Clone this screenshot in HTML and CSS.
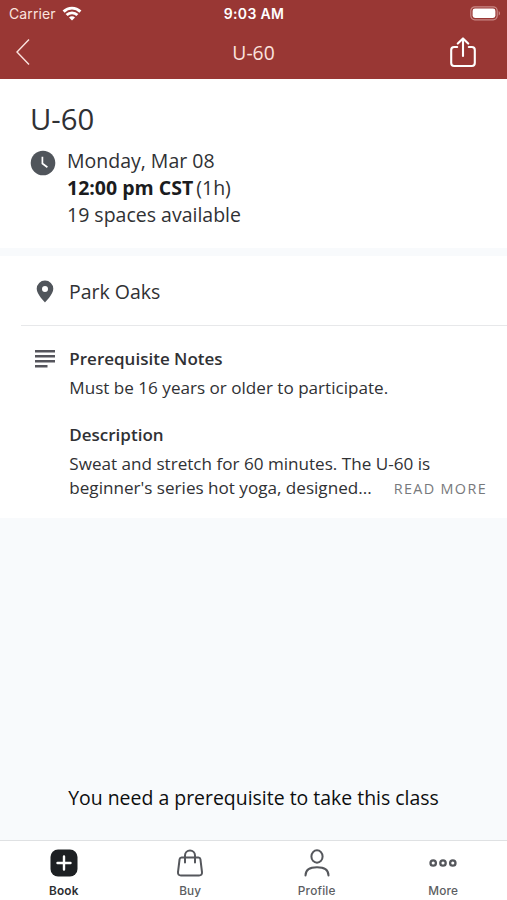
FILE: index.html
```html
<!DOCTYPE html>
<html lang="en">
<head>
<meta charset="utf-8">
<title>U-60</title>
<link rel="stylesheet" href="styles.css">
</head>
<body>
<div class="app">
  <header class="header">
    <div class="status">
      <div class="carrier"><span>Carrier</span>
        <svg width="20" height="15" viewBox="0 0 20 15" fill="none" stroke="#fff" stroke-width="2.9"><path d="M1.600 5.600a12 12 0 0 1 16.800 0M4.600 9.100a7.600 7.600 0 0 1 10.800 0"/><path d="M10 14.500 7 11.500a4.200 4.200 0 0 1 6 0z" fill="#fff" stroke="none"/></svg>
      </div>
      <div class="time">9:03 AM</div>
      <svg class="battery" width="31" height="15" viewBox="0 0 31 15"><rect x=".8" y=".8" width="26.4" height="13" rx="4" fill="none" stroke="#c98885" stroke-width="1.2"/><rect x="2.6" y="2.6" width="22.8" height="9.4" rx="2.4" fill="#fff"/><path d="M28.7 5v4.6c1.8-.8 1.8-3.8 0-4.6z" fill="#c98885"/></svg>
    </div>
    <nav class="nav">
      <svg width="14" height="28" viewBox="0 0 14 28" fill="none" stroke="#fbe3df" stroke-width="1.4"><path d="M13 1.500 1 14l12 12.500"/></svg>
      <h1 class="nav-title">U-60</h1>
      <svg class="share" width="26" height="31" viewBox="0 0 26 31" fill="none" stroke="#fff" stroke-width="2.100" stroke-linecap="round" stroke-linejoin="round"><path d="M7.200 10H4.200Q1.200 10 1.200 13V26Q1.200 29 4.200 29H21.800Q24.800 29 24.800 26V13Q24.800 10 21.800 10H18.800M13 19V2M7.800 6.600 13 1.400l5.200 5.200"/></svg>
    </nav>
  </header>
  <main class="main">
    <section class="summary">
      <h2 class="class-name">U-60</h2>
      <div class="when">
        <svg width="26" height="26" viewBox="0 0 26 26"><circle cx="13" cy="13" r="12.300" fill="#50555b"/><path d="M12.400 6.800v6.700l5 3.700" fill="none" stroke="#fff" stroke-width="1.700"/></svg>
        <div class="when-text">
          <div class="date">Monday, Mar 08</div>
          <div class="hours"><b>12:00 pm CST</b><span>(1h)</span></div>
          <div class="spaces">19 spaces available</div>
        </div>
      </div>
    </section>
    <section class="location">
      <svg width="18" height="23" viewBox="0 0 18 23"><path fill="#50555b" fill-rule="evenodd" d="M9 .5A8.300 8.300 0 0 0 .7 8.800C.7 14.500 9 22.500 9 22.500s8.300-8 8.300-13.700A8.300 8.300 0 0 0 9 .5zm0 5.400a3 3 0 1 1 0 6 3 3 0 0 1 0-6z"/></svg>
      <span class="place">Park Oaks</span>
    </section>
    <section class="details">
      <svg width="20" height="18" viewBox="0 0 20 18" fill="#55555c"><path d="M0 0h20v2.500H0zM0 5h20v2.500H0zM0 10h20v2.500H0zM0 15h12.500v2.500H0z"/></svg>
      <div class="notes">
        <h3 class="label prereq">Prerequisite Notes</h3>
        <p class="line must">Must be 16 years or older to participate.</p>
        <h3 class="label desc">Description</h3>
        <p class="line sweat">Sweat and stretch for 60 minutes. The U-60 is</p>
        <div class="last"><p class="line">beginner's series hot yoga, designed...</p><a class="more">READ MORE</a></div>
      </div>
    </section>
    <p class="warning">You need a prerequisite to take this class</p>
  </main>
  <footer class="tabs">
    <div class="tab active"><svg width="28" height="28" viewBox="0 0 28 28"><rect x=".5" y=".5" width="27" height="27" rx="7.500" fill="#1d2023"/><path d="M14 7.500v13M7.500 14h13" stroke="#fff" stroke-width="2.400" stroke-linecap="round"/></svg><span>Book</span></div>
    <div class="tab"><svg width="28" height="28" viewBox="0 0 28 28" fill="none" stroke="#55575c" stroke-width="2" stroke-linecap="round" stroke-linejoin="round"><path d="M5.500 8.500h17q1.600 0 1.900 1.700l1.600 13q.3 3.300-3 3.300H5q-3.300 0-3-3.300l1.600-13Q3.900 8.500 5.500 8.500zM9 13.500V6.500a5 5 0 0 1 10 0v7"/></svg><span>Buy</span></div>
    <div class="tab"><svg width="28" height="28" viewBox="0 0 28 28" fill="none" stroke="#55575c" stroke-width="2" stroke-linecap="round"><ellipse cx="14" cy="7.500" rx="5.600" ry="6.200"/><path d="M2.500 26.500c0-5.500 4.500-8.200 11.500-8.200s11.500 2.700 11.500 8.200"/></svg><span>Profile</span></div>
    <div class="tab"><svg width="28" height="28" viewBox="0 0 28 28" fill="none" stroke="#55575c" stroke-width="2.300"><circle cx="4.200" cy="14" r="2.700"/><circle cx="14" cy="14" r="2.700"/><circle cx="23.800" cy="14" r="2.700"/></svg><span>More</span></div>
  </footer>
</div>
</body>
</html>
```
FILE: styles.css
```css
* { box-sizing: border-box; margin: 0; padding: 0; }
body { font-family: "Open Sans", "Noto Sans", sans-serif; color: #303134; background: #f8fafc; }
svg { display: block; flex: none; }
.app { width: 507px; height: 900px; display: flex; flex-direction: column; white-space: nowrap; overflow: hidden; }
.header { height: 79px; background: #993734; color: #fff; flex: none; }
.status { height: 27px; display: grid; grid-template-columns: 1fr auto 1fr; align-items: center; padding: 0 6px 0 9px; font-family: Inter, sans-serif; }
.carrier { display: flex; align-items: center; gap: 6px; font-size: 14px; letter-spacing: .1px; color: #fbe3df; }
.time { font-size: 14px; font-weight: 600; letter-spacing: .35px; margin-left: -2px; }
.battery { justify-self: end; }
.nav { height: 52px; display: grid; grid-template-columns: 1fr auto 1fr; align-items: center; padding: 0 31px 0 16px; }
.nav > svg { margin-bottom: 2px; }
.nav-title { font-size: 19.3px; line-height: 26px; font-weight: 400; color: #fbe3df; margin: 0 0 1px 15px; }
.share { justify-self: end; }
.main { flex: 1; display: flex; flex-direction: column; }
.summary { height: 169px; background: #fff; padding: 20px 30px 0; margin-bottom: 8px; }
.class-name { font-size: 29.3px; line-height: 40px; font-weight: 400; }
.when { display: flex; gap: 11px; margin-top: 8px; }
.when svg { margin-top: 3px; }
.when-text { font-size: 19.5px; line-height: 27px; margin-top: -.5px; }
.hours b { color: #1b1c1e; margin-right: 3px; }
.location { height: 69px; background: #fff; display: flex; align-items: center; gap: 15px; padding: 2px 0 0 36px; font-size: 19.5px; }
.details { height: 193px; background: #fff linear-gradient(#e7e8ea, #e7e8ea) 21px 0 / 486px 1px no-repeat; display: flex; gap: 14.300px; padding: 22px 20px 0 35px; }
.details svg { margin-top: 3px; }
.notes { flex: 1; }
.label { font-size: 17px; line-height: 24px; font-weight: 600; }
.desc { margin-top: 22px; }
.line { font-size: 17.1px; line-height: 24.5px; }
.prereq, .desc { margin-bottom: 5px; }
.last { display: flex; justify-content: space-between; align-items: baseline; }
.more { font-size: 14.4px; letter-spacing: 1.35px; color: #77797c; }
.warning { margin-top: auto; margin-bottom: 28px; line-height: 28px; font-size: 19.45px; text-align: center; color: #0d0e0f; }
.tabs { height: 60px; flex: none; background: #fff; border-top: 1px solid #dfe1e3; display: grid; grid-template-columns: repeat(4, 126.5px); justify-content: center; }
.tab { display: flex; flex-direction: column; align-items: center; padding-top: 8px; gap: 6px; font-family: Inter, sans-serif; font-size: 11.8px; letter-spacing: .2px; line-height: 16px; font-weight: 500; color: #5c5e62; }
.active { color: #2c2e31; font-weight: 600; }
```
